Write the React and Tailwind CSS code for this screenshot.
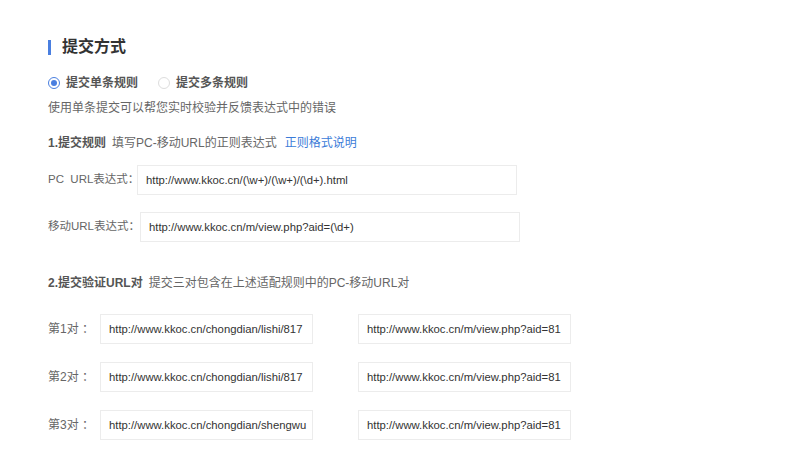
import React from 'react';

const font = "font-['Liberation_Sans','Noto_Sans_CJK_SC',sans-serif]";

const pairs = [
    ['http://www.kkoc.cn/chongdian/lishi/817', 'http://www.kkoc.cn/m/view.php?aid=81'],
    ['http://www.kkoc.cn/chongdian/lishi/817', 'http://www.kkoc.cn/m/view.php?aid=81'],
    ['http://www.kkoc.cn/chongdian/shengwu', 'http://www.kkoc.cn/m/view.php?aid=81'],
];

const Field = ({ value, className }) => (
    <div className={`h-[30px] shrink-0 border border-[#ececec] bg-white flex items-center px-2 overflow-hidden whitespace-nowrap text-[11.3px] text-[#333] ${className}`}>
        {value}
    </div>
);

const App = () => {
    return (
        <div className={`w-[800px] h-[463px] bg-white pl-[48px] pt-[38px] ${font}`}>
            {/* Section title */}
            <div className="flex items-center h-[18px]">
                <span className="w-[3px] h-[15px] bg-[#4a7fe0] mr-[11px]" />
                <span className="text-[16px] font-bold text-[#333]">提交方式</span>
            </div>

            {/* Radios */}
            <div className="flex items-center mt-[19px] h-[16px] text-[12px] font-bold text-[#555]">
                <span className="w-[12px] h-[12px] rounded-full border border-[#4a7fe0] flex items-center justify-center">
                    <span className="w-[6px] h-[6px] rounded-full bg-[#4a7fe0]" />
                </span>
                <span className="ml-[6px]">提交单条规则</span>
                <span className="ml-[20px] w-[12px] h-[12px] rounded-full border border-[#ddd]" />
                <span className="ml-[6px]">提交多条规则</span>
            </div>

            <div className="mt-[8px] text-[12px] text-[#666] h-[16px]">使用单条提交可以帮您实时校验并反馈表达式中的错误</div>

            {/* Step 1 */}
            <div className="mt-[20px] flex items-center text-[12px] h-[16px] whitespace-nowrap">
                <span className="font-bold text-[#555]">1.提交规则</span>
                <span className="ml-[6px] text-[#666]">填写PC-移动URL的正则表达式</span>
                <span className="ml-[8px] text-[#3b7bd8]">正则格式说明</span>
            </div>

            <div className="mt-[14px] flex items-center">
                <span className="w-[89px] shrink-0 text-[11.5px] text-[#666] whitespace-pre">PC  URL表达式：</span>
                <Field value="http://www.kkoc.cn/(\w+)/(\w+)/(\d+).html" className="w-[380px]" />
            </div>

            <div className="mt-[17px] flex items-center">
                <span className="w-[92px] shrink-0 text-[11.5px] text-[#666] whitespace-nowrap">移动URL表达式：</span>
                <Field value="http://www.kkoc.cn/m/view.php?aid=(\d+)" className="w-[380px]" />
            </div>

            {/* Step 2 */}
            <div className="mt-[33px] flex items-center text-[12px] h-[16px] whitespace-nowrap">
                <span className="font-bold text-[#555]">2.提交验证URL对</span>
                <span className="ml-[6px] text-[#666]">提交三对包含在上述适配规则中的PC-移动URL对</span>
            </div>

            <div className="mt-[23px] flex flex-col gap-[18px]">
                {pairs.map((p, i) => (
                    <div key={i} className="flex items-center">
                        <span className="w-[52px] shrink-0 text-[12px] text-[#666] whitespace-pre">第{i + 1}对 ：</span>
                        <Field value={p[0]} className="w-[213px]" />
                        <Field value={p[1]} className="w-[213px] ml-[45px]" />
                    </div>
                ))}
            </div>
        </div>
    );
};

export default App;
